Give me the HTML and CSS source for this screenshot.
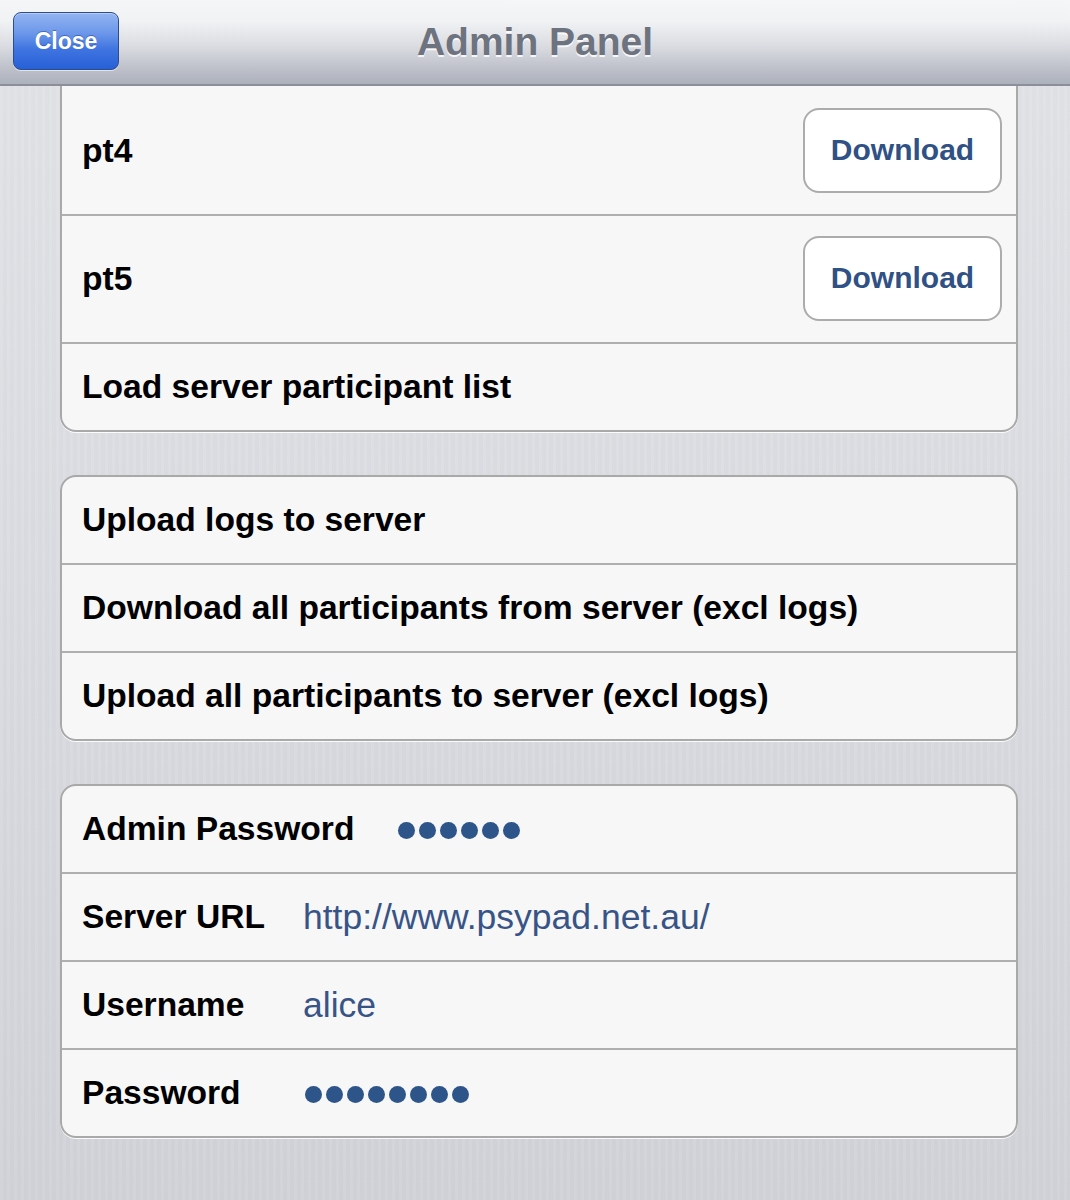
FILE: index.html
```html
<!DOCTYPE html>
<html>
<head>
<meta charset="utf-8">
<link rel="stylesheet" href="styles.css">
</head>
<body>
<div class="screen">
  <header class="navbar">
    <button class="close-btn">Close</button>
    <h1 class="nav-title">Admin Panel</h1>
  </header>
  <main class="content">
    <section class="group group-cut">
      <div class="row row-tall">
        <span class="label">pt4</span>
        <button class="dl-btn">Download</button>
      </div>
      <div class="row row-tall">
        <span class="label">pt5</span>
        <button class="dl-btn">Download</button>
      </div>
      <div class="row">
        <span class="label">Load server participant list</span>
      </div>
    </section>
    <section class="group">
      <div class="row"><span class="label">Upload logs to server</span></div>
      <div class="row"><span class="label">Download all participants from server (excl logs)</span></div>
      <div class="row"><span class="label">Upload all participants to server (excl logs)</span></div>
    </section>
    <section class="group">
      <div class="row">
        <span class="label field-label field-label-wide">Admin Password</span>
        <span class="dots"><i></i><i></i><i></i><i></i><i></i><i></i></span>
      </div>
      <div class="row">
        <span class="label field-label">Server URL</span>
        <span class="value">http://www.psypad.net.au/</span>
      </div>
      <div class="row">
        <span class="label field-label">Username</span>
        <span class="value">alice</span>
      </div>
      <div class="row">
        <span class="label field-label">Password</span>
        <span class="dots dots-offset"><i></i><i></i><i></i><i></i><i></i><i></i><i></i><i></i></span>
      </div>
    </section>
  </main>
</div>
</body>
</html>
```

FILE: styles.css
```css
* { box-sizing: border-box; }
html, body { margin: 0; padding: 0; }
body {
  font-family: "Liberation Sans", Arial, Helvetica, sans-serif;
  width: 1070px;
  height: 1200px;
  overflow: hidden;
}
.screen {
  width: 1070px;
  height: 1200px;
  display: flex;
  flex-direction: column;
  background:
    repeating-linear-gradient(90deg, rgba(255,255,255,0.05) 0 3px, rgba(0,0,0,0.006) 3px 7px),
    linear-gradient(180deg, #e1e3e7 0%, #d9dbe0 50%, #d1d2d7 100%);
}
.navbar {
  height: 86px;
  flex: 0 0 86px;
  border-bottom: 2px solid #8c8f99;
  background: linear-gradient(180deg, #f5f6f8 0%, #f1f2f4 25%, #dadce1 55%, #bfc2cb 80%, #adb1bc 100%);
  display: flex;
  align-items: center;
  position: relative;
  padding-left: 13px;
}
.close-btn {
  width: 106px;
  height: 58px;
  margin-top: -2px;
  border: 1px solid #2b4d8c;
  border-radius: 8px;
  background: linear-gradient(180deg, #93b4f1 0%, #6d98ea 35%, #3f74e0 65%, #2760d8 100%);
  color: #fff;
  font-family: "Liberation Sans", Arial, sans-serif;
  font-weight: bold;
  font-size: 23px;
  text-shadow: 0 -1px 0 rgba(30,60,130,0.5);
  box-shadow: 0 1px 0 rgba(255,255,255,0.6), inset 0 1px 0 rgba(255,255,255,0.35);
  padding: 0;
}
.nav-title {
  position: absolute;
  left: 0;
  right: 0;
  top: 20px;
  margin: 0;
  text-align: center;
  font-size: 39px;
  font-weight: bold;
  color: #6e7380;
  text-shadow: 0 2px 0 rgba(255,255,255,0.85);
  pointer-events: none;
  line-height: 44px;
}
.content {
  flex: 1;
  overflow: hidden;
  padding: 0 52px 0 60px;
  display: flex;
  flex-direction: column;
  gap: 43px;
}
.group {
  background: #f7f7f7;
  border: 2px solid #a9a9a9;
  border-radius: 16px;
  box-shadow: 0 1px 0 rgba(255,255,255,0.9);
  overflow: hidden;
}
.group-cut {
  border-top: 0;
  border-radius: 0 0 16px 16px;
  padding-top: 2px;
}
.row {
  height: 86px;
  display: flex;
  align-items: center;
  padding: 0 14px 0 20px;
}
.row + .row {
  height: 88px;
  border-top: 2px solid #afafaf;
}
.row-tall { height: 126px; }
.row + .row-tall { height: 128px; }
.label {
  font-weight: bold;
  font-size: 33.6px;
  color: #000;
  flex: 0 0 auto;
}
.row-tall .label { flex: 1; }
.field-label { min-width: 221px; }
.field-label-wide { margin-right: 44px; }
.value {
  font-size: 35.5px;
  color: #385487;
}
.dl-btn {
  width: 199px;
  height: 85px;
  background: #fff;
  border: 2px solid #acacac;
  border-radius: 16px;
  color: #2f5185;
  font-family: "Liberation Sans", Arial, sans-serif;
  font-weight: bold;
  font-size: 30px;
  padding: 0;
  margin-top: -2px;
}
.dots {
  display: flex;
  gap: 4px;
  margin-top: 2px;
}
.dots i {
  display: block;
  width: 17px;
  height: 17px;
  border-radius: 50%;
  background: #2d5589;
}
.dots-offset { margin-left: 2px; }
```
